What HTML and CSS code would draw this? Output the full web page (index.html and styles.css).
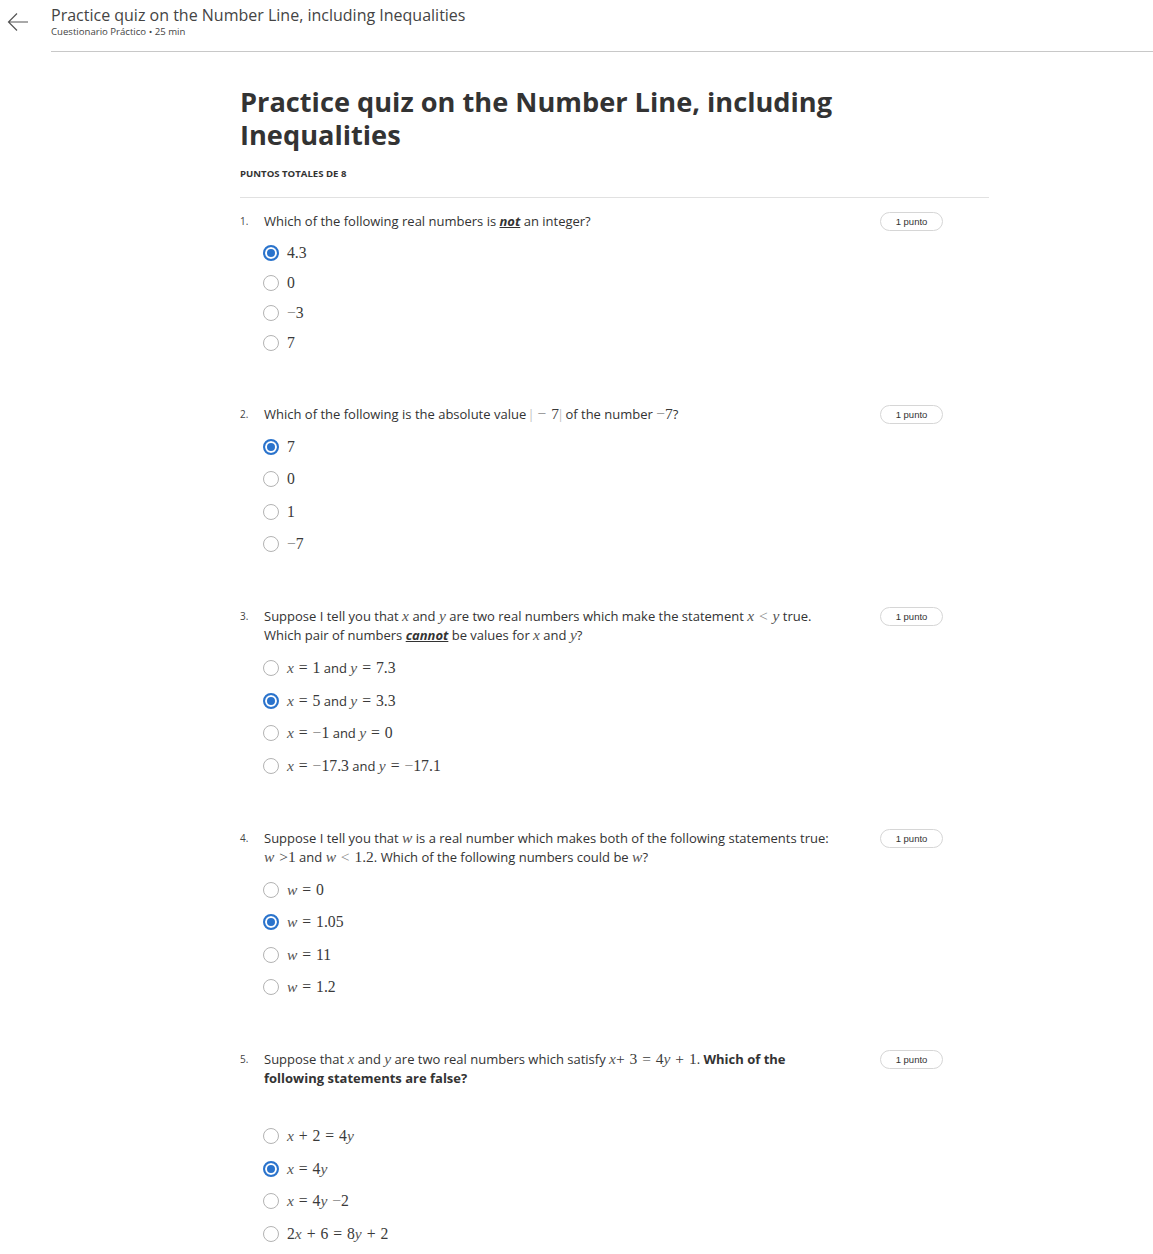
FILE: index.html
```html
<!DOCTYPE html>
<html lang="en">
<head>
<meta charset="utf-8">
<title>Practice quiz on the Number Line, including Inequalities</title>
<link rel="stylesheet" href="styles.css">
</head>
<body>
<header class="topbar">
  <div class="back">
    <svg width="22" height="20" viewBox="0 0 22 20" aria-hidden="true"><path d="M21 10H1.5M10 1.5L1.5 10L10 18.5" fill="none" stroke="#555" stroke-width="1.2"/></svg>
  </div>
  <div class="titles">
    <div class="top-title">Practice quiz on the Number Line, including Inequalities</div>
    <div class="top-sub">Cuestionario Práctico • 25 min</div>
  </div>
</header>

<main class="quiz">
  <h1 class="quiz-title">Practice quiz on the Number Line, including Inequalities</h1>
  <div class="points-total">PUNTOS TOTALES DE 8</div>

  <section class="question q-tight">
    <div class="q-head">
      <span class="q-num">1.</span>
      <div class="q-text">Which of the following real numbers is <b class="em">not</b> an integer?</div>
      <span class="pill">1 punto</span>
    </div>
    <ul class="options">
      <li><span class="radio on"></span><span class="label"><span class="m">4.3</span></span></li>
      <li><span class="radio"></span><span class="label"><span class="m">0</span></span></li>
      <li><span class="radio"></span><span class="label"><span class="m"><span class="op">−</span>3</span></span></li>
      <li><span class="radio"></span><span class="label"><span class="m">7</span></span></li>
    </ul>
  </section>

  <section class="question">
    <div class="q-head">
      <span class="q-num">2.</span>
      <div class="q-text">Which of the following is the absolute value <span class="m"><span class="bar">|</span> <span class="op">−</span> 7<span class="bar">|</span></span> of the number <span class="m"><span class="op">−</span>7</span>?</div>
      <span class="pill">1 punto</span>
    </div>
    <ul class="options">
      <li><span class="radio on"></span><span class="label"><span class="m">7</span></span></li>
      <li><span class="radio"></span><span class="label"><span class="m">0</span></span></li>
      <li><span class="radio"></span><span class="label"><span class="m">1</span></span></li>
      <li><span class="radio"></span><span class="label"><span class="m"><span class="op">−</span>7</span></span></li>
    </ul>
  </section>

  <section class="question">
    <div class="q-head">
      <span class="q-num">3.</span>
      <div class="q-text">Suppose I tell you that <i class="v">x</i> and <i class="v">y</i> are two real numbers which make the statement <span class="m"><i class="v">x</i> <span class="op">&lt;</span> <i class="v">y</i></span> true.<br>Which pair of numbers <b class="em">cannot</b> be values for <i class="v">x</i> and <i class="v">y</i>?</div>
      <span class="pill">1 punto</span>
    </div>
    <ul class="options">
      <li><span class="radio"></span><span class="label"><span class="m"><i class="v">x</i> = 1</span> and <span class="m"><i class="v">y</i> = 7.3</span></span></li>
      <li><span class="radio on"></span><span class="label"><span class="m"><i class="v">x</i> = 5</span> and <span class="m"><i class="v">y</i> = 3.3</span></span></li>
      <li><span class="radio"></span><span class="label"><span class="m"><i class="v">x</i> = <span class="op">−</span>1</span> and <span class="m"><i class="v">y</i> = 0</span></span></li>
      <li><span class="radio"></span><span class="label"><span class="m"><i class="v">x</i> = <span class="op">−</span>17.3</span> and <span class="m"><i class="v">y</i> = <span class="op">−</span>17.1</span></span></li>
    </ul>
  </section>

  <section class="question">
    <div class="q-head">
      <span class="q-num">4.</span>
      <div class="q-text">Suppose I tell you that <i class="v">w</i> is a real number which makes both of the following statements true:<br><span class="m"><i class="v">w</i> &gt;1</span> and <span class="m"><i class="v">w</i> <span class="op">&lt;</span> 1.2</span>. Which of the following numbers could be <i class="v">w</i>?</div>
      <span class="pill">1 punto</span>
    </div>
    <ul class="options">
      <li><span class="radio"></span><span class="label"><span class="m"><i class="v">w</i> = 0</span></span></li>
      <li><span class="radio on"></span><span class="label"><span class="m"><i class="v">w</i> = 1.05</span></span></li>
      <li><span class="radio"></span><span class="label"><span class="m"><i class="v">w</i> = 11</span></span></li>
      <li><span class="radio"></span><span class="label"><span class="m"><i class="v">w</i> = 1.2</span></span></li>
    </ul>
  </section>

  <section class="question q-spaced">
    <div class="q-head">
      <span class="q-num">5.</span>
      <div class="q-text">Suppose that <i class="v">x</i> and <i class="v">y</i> are two real numbers which satisfy <span class="m"><i class="v">x</i>+ 3 = 4<i class="v">y</i> + 1</span>. <b>Which of the<br>following statements are false?</b></div>
      <span class="pill">1 punto</span>
    </div>
    <ul class="options">
      <li><span class="radio"></span><span class="label"><span class="m"><i class="v">x</i> + 2 = 4<i class="v">y</i></span></span></li>
      <li><span class="radio on"></span><span class="label"><span class="m"><i class="v">x</i> = 4<i class="v">y</i></span></span></li>
      <li><span class="radio"></span><span class="label"><span class="m"><i class="v">x</i> = 4<i class="v">y</i> <span class="op">−</span>2</span></span></li>
      <li><span class="radio"></span><span class="label"><span class="m">2<i class="v">x</i> + 6 = 8<i class="v">y</i> + 2</span></span></li>
    </ul>
  </section>
</main>
</body>
</html>
```

FILE: styles.css
```css
* { box-sizing: border-box; }

body {
  margin: 0;
  background: #fff;
  color: #333;
  font-family: "Open Sans", "Noto Sans", sans-serif;
}

.topbar {
  display: flex;
  align-items: flex-start;
}

.back {
  width: 51px;
  padding: 12px 0 0 7px;
  line-height: 0;
}

.titles {
  flex: 1;
  padding-top: 5px;
  padding-bottom: 13px;
  border-bottom: 1px solid #c8c8c8;
}

.top-title {
  font-size: 16px;
  line-height: 20px;
  color: #444;
}

.top-sub {
  margin-top: 1px;
  font-size: 9.6px;
  line-height: 12px;
  color: #444;
}

.quiz {
  width: 749px;
  margin-left: 240px;
  padding-top: 33px;
}

.quiz-title {
  margin: 0;
  font-size: 27.2px;
  line-height: 33px;
  font-weight: 700;
  color: #333;
  max-width: 620px;
}

.points-total {
  margin-top: 17px;
  margin-bottom: 14px;
  padding-bottom: 17px;
  border-bottom: 1px solid #e1e1e1;
  font-size: 9.6px;
  line-height: 12px;
  font-weight: 700;
  color: #333;
}

.question {
  margin: 0 0 46.5px;
}

.q-head {
  display: flex;
  align-items: flex-start;
}

.q-num {
  width: 24px;
  flex: none;
  font-size: 10px;
  line-height: 19px;
  color: #444;
}

.q-text {
  width: 592px;
  font-size: 13px;
  line-height: 19px;
  color: #333;
}

.q-text b { font-weight: 700; }

.em {
  font-style: italic;
  text-decoration: underline;
}

.pill {
  flex: none;
  margin-left: auto;
  margin-right: 46px;
  width: 63px;
  height: 19px;
  border: 1px solid #d6d6d6;
  border-radius: 10px;
  font-family: "Liberation Sans", Arial, sans-serif;
  font-size: 9.5px;
  line-height: 17px;
  text-align: center;
  color: #333;
}

.options {
  list-style: none;
  margin: 7px 0 0 23px;
  padding: 0;
}

.options li {
  display: flex;
  align-items: center;
  height: 32.5px;
}

.label {
  font-size: 13px;
  color: #333;
}

.q-tight .options li { height: 30px; }

.q-spaced .options { margin-top: 32px; }

.radio {
  flex: none;
  width: 16px;
  height: 16px;
  margin-right: 8px;
  border: 1.5px solid #b3b3b3;
  border-radius: 50%;
  background: #fff;
}

.radio.on {
  border: 2px solid #2a73cc;
  box-shadow: inset 0 0 0 2px #fff, inset 0 0 0 8px #2a73cc;
}

.m {
  font-family: "Liberation Serif", "DejaVu Serif", serif;
  font-size: 15.7px;
  color: #3a3a3a;
  word-spacing: 1px;
}

.q-text .m,
.q-text .v {
  font-size: 15.5px;
  line-height: 0;
}

.v {
  font-family: "Liberation Serif", "DejaVu Serif", serif;
  font-style: italic;
  font-size: 15.5px;
  color: #555;
}

.op { color: #888; }

.bar { color: #bbb; }
```
